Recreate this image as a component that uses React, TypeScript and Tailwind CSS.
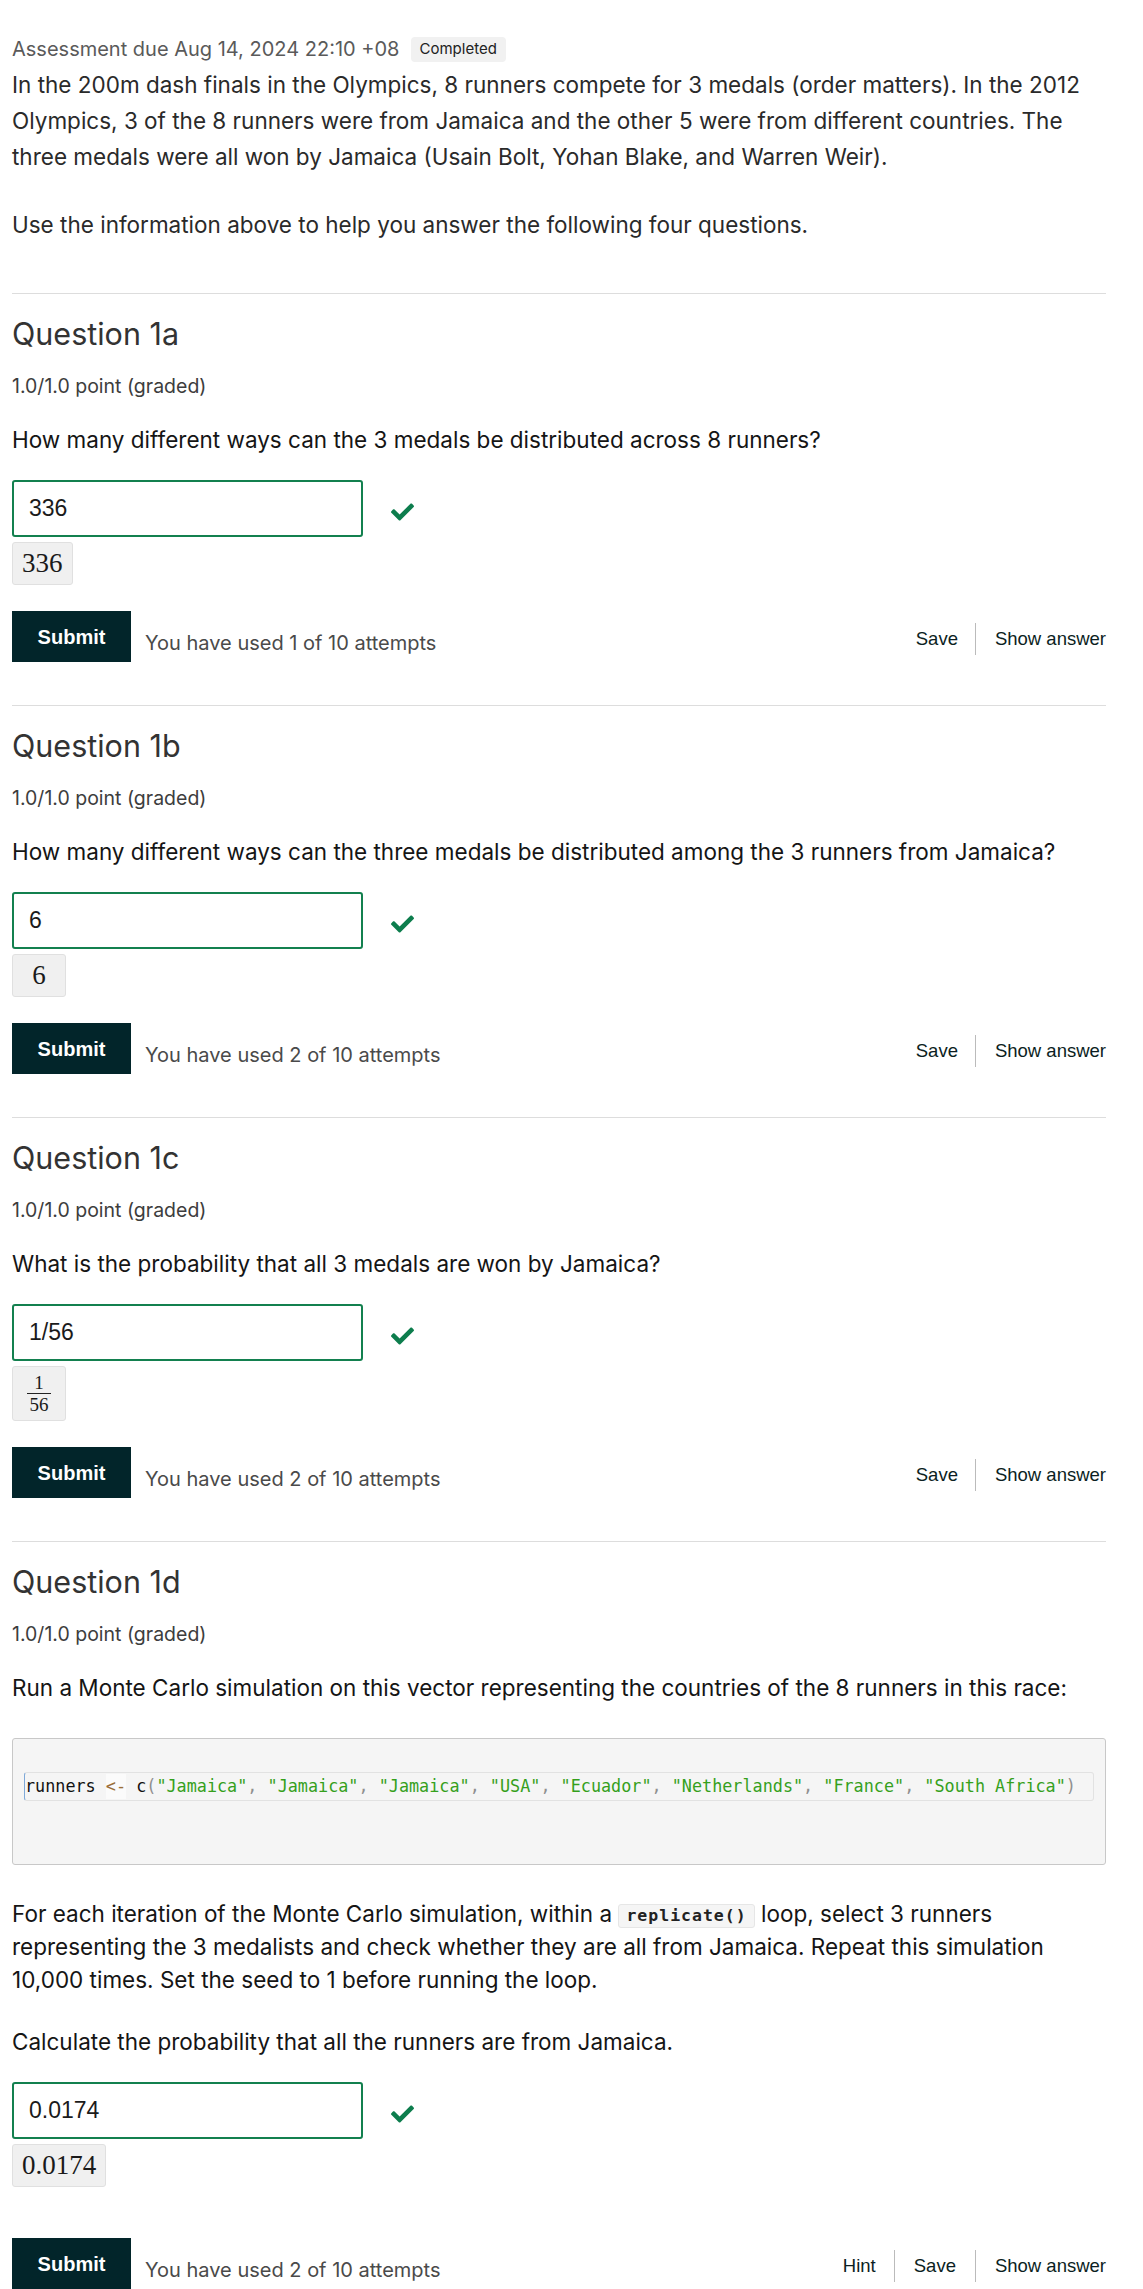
import type { ReactNode } from 'react'

// FontAwesome-style solid check
function CheckMark({ className }: { className?: string }) {
    return (
        <svg viewBox="0 69 512 374" className={className} fill="#0d7d4d" aria-hidden>
            <path d="M173.898 439.404l-166.4-166.4c-9.997-9.997-9.997-26.206 0-36.204l36.203-36.204c9.997-9.998 26.207-9.998 36.204 0L192 312.69 432.095 72.596c9.997-9.997 26.207-9.997 36.204 0l36.203 36.204c9.997 9.997 9.997 26.206 0 36.204l-294.4 294.401c-9.998 9.997-26.207 9.997-36.204-.001z" />
        </svg>
    )
}

interface QuestionProps {
    title: string
    prompt: ReactNode
    answer: string
    rendered: ReactNode
    attempts: number
    hint?: boolean
    submitGap?: string
    children?: ReactNode
}

function Question({ title, prompt, answer, rendered, attempts, hint, submitGap = 'mt-[26px]', children }: QuestionProps) {
    return (
        <section className="border-t border-[#dddddd] pb-[43px]">
            <h2 className="pt-[22px] text-[30.5px] leading-[36px] font-normal text-[#333333]">{title}</h2>
            <p className="mt-[21px] text-[19.5px] leading-[26px] text-[#3d3d3d]">1.0/1.0 point (graded)</p>
            <p className="mt-[26px] text-[22.5px] leading-[30px] text-[#151515]">{prompt}</p>

            {children}

            <div className="mt-[25px] flex items-center">
                <div className="w-[351px] h-[57px] border-2 border-[#13804f] rounded-[3px] pl-[15px] flex items-center font-['Liberation_Sans',sans-serif] text-[23px] text-[#1b1b1b]">
                    {answer}
                </div>
                <CheckMark className="ml-[28px] mt-[7px] w-[23px] h-[18px]" />
            </div>

            <div className="mt-[5px] inline-flex items-center justify-center min-w-[54px] min-h-[43px] px-[9px] bg-[#f0f0f0] border border-[#e0e0e0] rounded-[3px] font-['Liberation_Serif',serif] text-[27px] text-[#1a1a1a]">
                {rendered}
            </div>

            <div className={`${submitGap} flex items-center`}>
                <button className="w-[119px] h-[51px] bg-[#02252a] text-white font-bold text-[20px] font-['Liberation_Sans',sans-serif]">
                    Submit
                </button>
                <span className="ml-[14px] pt-[13px] text-[20px] text-[#4a4a4a]">
                    You have used {attempts} of 10 attempts
                </span>
                <div className="ml-auto mt-[4px] flex items-center font-['Liberation_Sans',sans-serif] text-[18.5px] text-[#0b1e22]">
                    {hint && (
                        <>
                            <span className="pr-[18px]">Hint</span>
                            <span className="w-px h-[32px] bg-[#bbbbbb]" />
                        </>
                    )}
                    <span className={hint ? 'px-[19px]' : 'pr-[17px]'}>Save</span>
                    <span className="w-px h-[32px] bg-[#bbbbbb]" />
                    <span className="pl-[19px]">Show answer</span>
                </div>
            </div>
        </section>
    )
}

function Fraction() {
    return (
        <span className="flex flex-col items-center text-[19px] leading-[17px] py-[7px]">
            <span className="px-[2px]">1</span>
            <span className="w-[24px] h-px bg-[#222222] my-[2px]" />
            <span className="px-[2px]">56</span>
        </span>
    )
}

function CodeBlock() {
    const str = 'text-[#35a01c]'
    const punc = 'text-[#8f8f8f]'
    const items = ['"Jamaica"', '"Jamaica"', '"Jamaica"', '"USA"', '"Ecuador"', '"Netherlands"', '"France"', '"South Africa"']
    return (
        <div className="mt-[35px] bg-[#f5f5f5] border border-[#c8c8c8] rounded-[3px] pt-[33px] pb-[63px] px-[11px]">
            <div className="h-[29px] flex items-center border border-[#e2e2e2] border-l-[#7fa9d8] rounded-[3px] font-['DejaVu_Sans_Mono',monospace] text-[16.8px] whitespace-pre text-[#111111]">
                <span>runners </span>
                <span className="text-[#9a6e3a] bg-[#fbfbfb]">{'<-'}</span>
                <span> c</span>
                <span className={punc}>(</span>
                {items.map((it, i) => (
                    <span key={i}>
                        <span className={str}>{it}</span>
                        {i < items.length - 1 && <span className={punc}>, </span>}
                    </span>
                ))}
                <span className={punc}>)</span>
            </div>
        </div>
    )
}

export default function App() {
    return (
        <div className="min-h-[2289px] bg-white pl-3 pr-[37px] font-['Inter',sans-serif]">
            {/* Header */}
            <div className="pt-[36px] h-[62px] flex items-center gap-[11px]">
                <span className="text-[20px] leading-[25px] text-[#5a5a5a]">Assessment due Aug 14, 2024 22:10 +08</span>
                <span className="h-[25px] px-[9px] flex items-center bg-[#f1f1f1] rounded-[4px] text-[15px] text-[#222222]">
                    Completed
                </span>
            </div>

            <p className="mt-[5px] text-[22.5px] leading-[36px] text-[#2a2a2a]">
                In the 200m dash finals in the Olympics, 8 runners compete for 3 medals (order matters). In the 2012 Olympics, 3 of the 8 runners were from Jamaica and the other 5 were from different countries. The three medals were all won by Jamaica (Usain Bolt, Yohan Blake, and Warren Weir).
            </p>
            <p className="mt-[32px] text-[22.5px] leading-[36px] text-[#2a2a2a]">
                Use the information above to help you answer the following four questions.
            </p>

            <div className="mt-[50px]">
                <Question
                    title="Question 1a"
                    prompt="How many different ways can the 3 medals be distributed across 8 runners?"
                    answer="336"
                    rendered="336"
                    attempts={1}
                />
                <Question
                    title="Question 1b"
                    prompt="How many different ways can the three medals be distributed among the 3 runners from Jamaica?"
                    answer="6"
                    rendered="6"
                    attempts={2}
                />
                <Question
                    title="Question 1c"
                    prompt="What is the probability that all 3 medals are won by Jamaica?"
                    answer="1/56"
                    rendered={<Fraction />}
                    attempts={2}
                />
                <Question
                    title="Question 1d"
                    prompt="Run a Monte Carlo simulation on this vector representing the countries of the 8 runners in this race:"
                    answer="0.0174"
                    rendered="0.0174"
                    attempts={2}
                    hint
                    submitGap="mt-[51px]"
                >
                    <CodeBlock />
                    <p className="mt-[32px] pr-[12px] text-[22.5px] leading-[33px] text-[#151515]">
                        For each iteration of the Monte Carlo simulation, within a{' '}
                        <code className="inline-block h-[24px] leading-[22px] px-[7px] align-[1px] bg-[#f5f5f5] border border-[#e6e6e6] rounded-[3px] font-['DejaVu_Sans_Mono',monospace] font-bold text-[16.5px] text-[#222222] tracking-[1px]">
                            replicate()
                        </code>{' '}
                        loop, select 3 runners representing the 3 medalists and check whether they are all from Jamaica. Repeat this simulation 10,000 times. Set the seed to 1 before running the loop.
                    </p>
                    <p className="mt-[29px] -mb-[1px] text-[22.5px] leading-[33px] text-[#151515]">
                        Calculate the probability that all the runners are from Jamaica.
                    </p>
                </Question>
            </div>
        </div>
    )
}
